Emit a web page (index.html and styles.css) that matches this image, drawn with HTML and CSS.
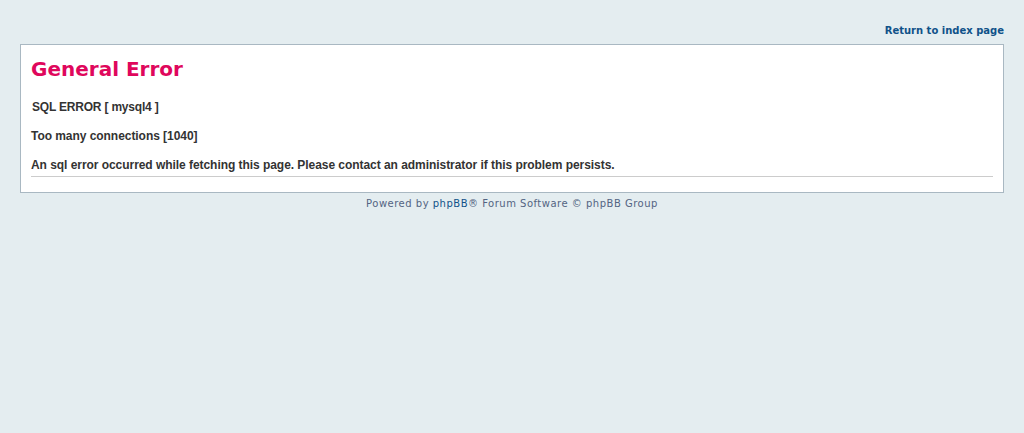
FILE: index.html
```html
<!DOCTYPE html>
<html>
<head>
<meta charset="utf-8">
<title>General Error</title>
<link rel="stylesheet" href="styles.css">
</head>
<body class="errorpage">
<div class="wrap">
  <div class="page-header"><a href="#">Return to index page</a></div>
  <div class="panel">
    <div class="content">
      <h1 class="title">General Error</h1>
      <div class="message"><span class="indent">SQL ERROR [ mysql4 ]</span><br><br>Too many connections [1040]<br><br>An sql error occurred while fetching this page. Please contact an administrator if this problem persists.</div>
    </div>
  </div>
  <div class="page-footer">Powered by <a href="#">phpBB</a>&reg; Forum Software &copy; phpBB Group</div>
</div>
</body>
</html>
```
FILE: styles.css
```css
* { margin: 0; padding: 0; }
html, body { height: 100%; }
body {
  font-family: "DejaVu Sans", Verdana, sans-serif;
  font-size: 10px;
  color: #536482;
  background: #e4edf0;
}
.wrap { padding: 0 20px 15px 20px; }
.page-header { text-align: right; height: 40px; }
.page-header a {
  display: inline-block;
  padding-top: 1px;
  font-weight: bold;
  line-height: 59px;
  color: #105289;
  text-decoration: none;
  font-size: 10px;
}
.panel {
  margin: 4px 0;
  background: #ffffff;
  border: 1px solid #a9b8c2;
}
.content { padding: 10px; }
.title {
  padding-top: 2px;
  font-family: "DejaVu Sans", Verdana, sans-serif;
  font-size: 20px;
  line-height: 24px;
  color: #df075c;
  font-weight: bold;
}
.message {
  margin-top: 19px;
  margin-bottom: 5px;
  border-bottom: 1px solid #cccccc;
  padding-bottom: 4px;
  color: #333333;
  font: bold 12px "Liberation Sans", Arial, sans-serif;
  line-height: 120%;
  letter-spacing: -0.05px;
}
.indent { padding-left: 1px; letter-spacing: -0.2px; }
.page-footer {
  margin-top: 5px;
  text-align: center;
  font-size: 10px;
  letter-spacing: 0.5px;
}
.page-footer a { color: #105289; text-decoration: none; }
```
